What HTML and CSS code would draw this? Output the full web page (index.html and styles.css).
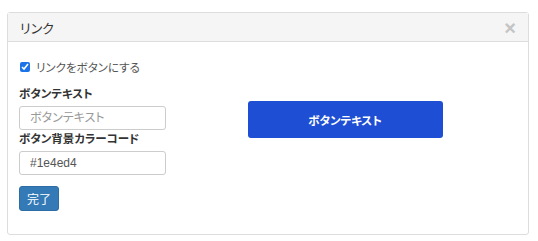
FILE: index.html
```html
<!DOCTYPE html>
<html lang="ja">
<head>
<meta charset="utf-8">
<link rel="stylesheet" href="styles.css">
</head>
<body>
<div class="panel">
  <div class="panel-head">
    <span class="title">リンク</span>
    <span class="close">×</span>
  </div>
  <div class="panel-body">
    <label class="check"><input type="checkbox" checked><span>リンクをボタンにする</span></label>
    <div class="row">
      <div class="form">
        <div class="lbl">ボタンテキスト</div>
        <input class="field" type="text" placeholder="ボタンテキスト">
        <div class="lbl lbl2">ボタン背景カラーコード</div>
        <input class="field" type="text" value="#1e4ed4">
        <button class="done">完了</button>
      </div>
      <div class="preview">
        <a class="preview-btn">ボタンテキスト</a>
      </div>
    </div>
  </div>
</div>
</body>
</html>
```
FILE: styles.css
```css
* { box-sizing: border-box; }
body {
  margin: 0;
  padding: 12px 9px 0 7px;
  background: #fff;
  font-family: "Liberation Sans", Arial, "Noto Sans CJK JP", sans-serif;
  font-size: 11.5px;
  font-feature-settings: "palt";
  color: #333;
}
.panel {
  border: 1px solid #ddd;
  border-radius: 3px;
  height: 223px;
}
.panel-head {
  height: 29px;
  background: #f5f5f5;
  border-bottom: 1px solid #ddd;
  display: flex;
  align-items: center;
  justify-content: space-between;
  padding: 0 12px 0 12px;
}
.title { font-size: 13px; color: #333; }
.close {
  font-size: 20px;
  font-weight: bold;
  color: #c4c4c4;
  line-height: 1;
  margin-top: 2px;
}
.panel-body { padding: 19px 11px 0 11px; }
.check {
  display: flex;
  align-items: center;
  gap: 6px;
  height: 12px;
  color: #555;
}
.check input { margin: 0 0 0 1px; width: 10px; height: 10px; accent-color: #1a73e8; }
.row { display: flex; }
.form { width: 148px; display: flex; flex-direction: column; align-items: flex-start; }
.lbl { font-weight: bold; margin-top: 15px; height: 13px; line-height: 13px; }
.lbl2 { margin-top: 3px; }
.field {
  margin-top: 5px;
  width: 147px;
  height: 24px;
  border: 1px solid #ccc;
  border-radius: 3px;
  padding: 0 0 0 10px;
  font-family: inherit;
  font-feature-settings: "palt";
  font-size: 12px;
  color: #555;
}
.field::placeholder { color: #999; }
.done {
  margin-top: 11px;
  width: 40px;
  height: 25px;
  background: #337ab7;
  border: 1px solid #2e6da4;
  border-radius: 3px;
  color: #fff;
  font-family: inherit;
  font-size: 12px;
}
.preview { flex: 1; display: flex; justify-content: center; padding-top: 28px; padding-left: 6px; }
.preview-btn {
  width: 195px;
  height: 37px;
  background: #1e4ed4;
  border-radius: 3px;
  color: #fff;
  font-weight: bold;
  display: flex;
  align-items: center;
  justify-content: center;
}
```
